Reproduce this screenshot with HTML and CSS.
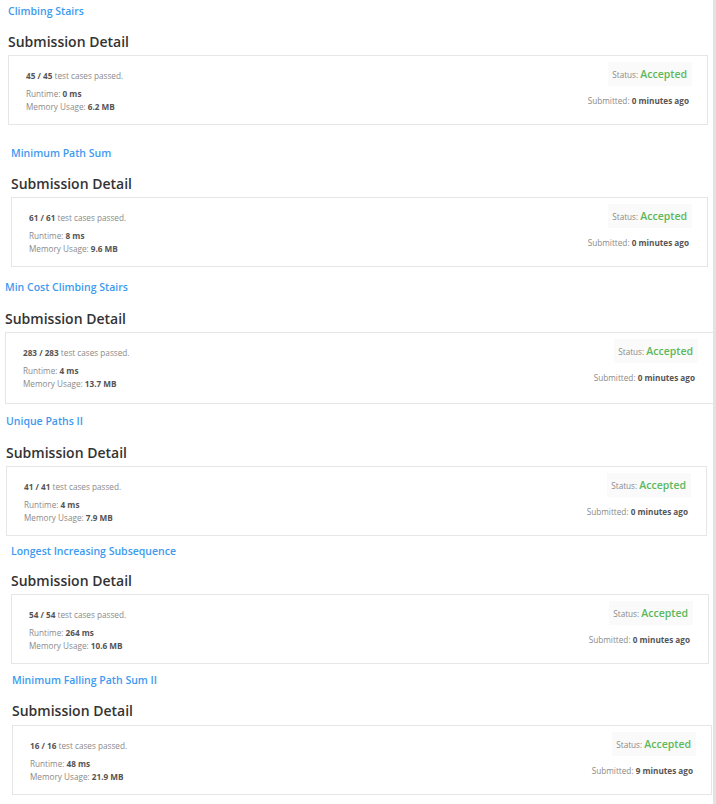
FILE: index.html
```html
<!DOCTYPE html>
<html>
<head>
<meta charset="utf-8">
<link rel="stylesheet" href="styles.css">
</head>
<body>
<div class="page">
  <section class="sub s1">
    <a class="title" href="#">Climbing Stairs</a>
    <h2 class="heading">Submission Detail</h2>
    <div class="box">
      <div class="left">
        <div class="passed"><b>45 / 45</b> test cases passed.</div>
        <div class="line line-first">Runtime: <b>0 ms</b></div>
        <div class="line">Memory Usage: <b>6.2 MB</b></div>
      </div>
      <div class="right">
        <div class="status">Status: <span class="accepted">Accepted</span></div>
        <div class="submitted">Submitted: <b>0 minutes ago</b></div>
      </div>
    </div>
  </section>

  <section class="sub s2">
    <a class="title" href="#">Minimum Path Sum</a>
    <h2 class="heading">Submission Detail</h2>
    <div class="box">
      <div class="left">
        <div class="passed"><b>61 / 61</b> test cases passed.</div>
        <div class="line line-first">Runtime: <b>8 ms</b></div>
        <div class="line">Memory Usage: <b>9.6 MB</b></div>
      </div>
      <div class="right">
        <div class="status">Status: <span class="accepted">Accepted</span></div>
        <div class="submitted">Submitted: <b>0 minutes ago</b></div>
      </div>
    </div>
  </section>

  <section class="sub s3">
    <a class="title" href="#">Min Cost Climbing Stairs</a>
    <h2 class="heading">Submission Detail</h2>
    <div class="box">
      <div class="left">
        <div class="passed"><b>283 / 283</b> test cases passed.</div>
        <div class="line line-first">Runtime: <b>4 ms</b></div>
        <div class="line">Memory Usage: <b>13.7 MB</b></div>
      </div>
      <div class="right">
        <div class="status">Status: <span class="accepted">Accepted</span></div>
        <div class="submitted">Submitted: <b>0 minutes ago</b></div>
      </div>
    </div>
  </section>

  <section class="sub s4">
    <a class="title" href="#">Unique Paths II</a>
    <h2 class="heading">Submission Detail</h2>
    <div class="box">
      <div class="left">
        <div class="passed"><b>41 / 41</b> test cases passed.</div>
        <div class="line line-first">Runtime: <b>4 ms</b></div>
        <div class="line">Memory Usage: <b>7.9 MB</b></div>
      </div>
      <div class="right">
        <div class="status">Status: <span class="accepted">Accepted</span></div>
        <div class="submitted">Submitted: <b>0 minutes ago</b></div>
      </div>
    </div>
  </section>

  <section class="sub s5">
    <a class="title" href="#">Longest Increasing Subsequence</a>
    <h2 class="heading">Submission Detail</h2>
    <div class="box">
      <div class="left">
        <div class="passed"><b>54 / 54</b> test cases passed.</div>
        <div class="line line-first">Runtime: <b>264 ms</b></div>
        <div class="line">Memory Usage: <b>10.6 MB</b></div>
      </div>
      <div class="right">
        <div class="status">Status: <span class="accepted">Accepted</span></div>
        <div class="submitted">Submitted: <b>0 minutes ago</b></div>
      </div>
    </div>
  </section>

  <section class="sub s6">
    <a class="title" href="#">Minimum Falling Path Sum II</a>
    <h2 class="heading">Submission Detail</h2>
    <div class="box">
      <div class="left">
        <div class="passed"><b>16 / 16</b> test cases passed.</div>
        <div class="line line-first">Runtime: <b>48 ms</b></div>
        <div class="line">Memory Usage: <b>21.9 MB</b></div>
      </div>
      <div class="right">
        <div class="status">Status: <span class="accepted">Accepted</span></div>
        <div class="submitted">Submitted: <b>9 minutes ago</b></div>
      </div>
    </div>
  </section>
</div>
</body>
</html>
```

FILE: styles.css
```css
html, body {
  margin: 0;
  padding: 0;
  background: #ffffff;
}

body {
  font-family: "Open Sans", "Noto Sans", sans-serif;
  color: #333333;
}

.page {
  width: 713px;
  min-height: 804px;
  border-right: 3px solid #e3e3e3;
  overflow: hidden;
}

.sub {
  display: flex;
  flex-direction: column;
  align-items: flex-start;
}

.title {
  display: block;
  font-size: 10.5px;
  line-height: 14px;
  font-weight: 600;
  color: #3d9af0;
  text-decoration: none;
}

.heading {
  margin: 14px 0 0 0;
  font-size: 14px;
  line-height: 20px;
  font-weight: 600;
  color: #333333;
}

.box {
  align-self: stretch;
  margin-top: 3px;
  height: 70px;
  box-sizing: border-box;
  border: 1px solid #e6e6e6;
  display: flex;
  justify-content: space-between;
  padding: 0 15px 0 17px;
}

.left {
  padding-top: 14px;
  font-size: 8.2px;
  color: #8a8a8a;
}

.left b, .submitted b {
  color: #555555;
  font-weight: 700;
}

.passed {
  line-height: 12px;
}

.line {
  line-height: 13px;
}

.line-first {
  margin-top: 5px;
}

.right {
  display: flex;
  flex-direction: column;
  align-items: flex-end;
  padding-top: 6px;
}

.status {
  background: #fafafa;
  padding: 0 5px 0 4px;
  height: 24px;
  line-height: 24px;
  font-size: 8.2px;
  color: #8a8a8a;
}

.accepted {
  font-size: 10.5px;
  font-weight: 600;
  color: #5cb85c;
}

.submitted {
  margin-top: 9px;
  margin-right: 3px;
  font-size: 8.2px;
  line-height: 12px;
  color: #8a8a8a;
}

.s1 { margin: 4px 5px 0 8px; }
.s2 { margin: 21px 5px 0 11px; }
.s3 { margin: 13px 0 0 5px; }
.s3 .heading { margin-top: 15px; }
.s3 .box { border-right: none; height: 72px; padding-right: 15px; }
.s4 { margin: 10px 6px 0 6px; }
.s4 .heading { margin-top: 15px; }
.s5 { margin: 8px 4px 0 11px; }
.s5 .heading { margin-top: 13px; }
.s6 { margin: 9px 1px 0 12px; }
.s6 .box { margin-top: 4px; }
```
